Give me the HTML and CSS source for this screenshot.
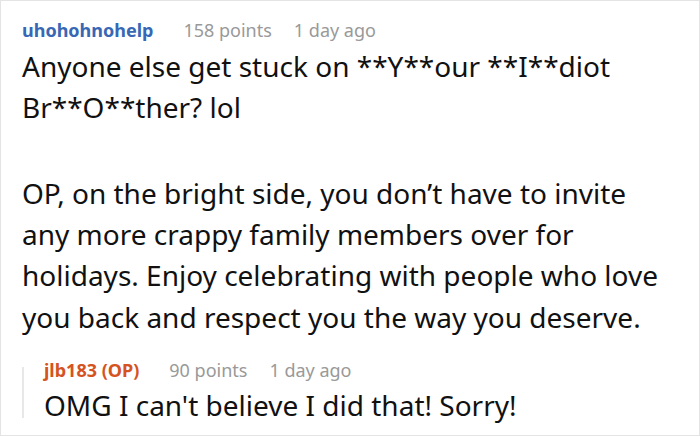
FILE: index.html
```html
<!DOCTYPE html>
<html>
<head>
<meta charset="utf-8">
<link rel="stylesheet" href="styles.css">
</head>
<body>
<div class="card">
  <div class="meta">
    <span class="user">uhohohnohelp</span>
    <span class="info">158 points</span>
    <span class="info">1 day ago</span>
  </div>
  <div class="body">
    <p>Anyone else get stuck on **Y**our **I**diot Br**O**ther? lol</p>
    <p>OP, on the bright side, you don’t have to invite any more crappy family members over for holidays. Enjoy celebrating with people who love you back and respect you the way you deserve.</p>
  </div>
  <div class="reply">
    <div class="meta">
      <span class="user op">jlb183 (OP)</span>
      <span class="info">90 points</span>
      <span class="info">1 day ago</span>
    </div>
    <div class="body">
      <p>OMG I can't believe I did that! Sorry!</p>
    </div>
  </div>
</div>
</body>
</html>
```
FILE: styles.css
```css
html, body {
  margin: 0;
  padding: 0;
  background: #fff;
}
.card {
  width: 700px;
  height: 436px;
  box-sizing: border-box;
  border: 1px solid #e4e4e4;
  padding: 17px 20px 0 21px;
  font-family: "Noto Sans", sans-serif;
  color: #111;
  overflow: hidden;
}
.meta {
  display: flex;
  gap: 22px;
  font-size: 18px;
  line-height: 24px;
}
.user {
  font-weight: bold;
  color: #3767b5;
  margin-right: 8px;
}
.user.op {
  color: #d5531f;
}
.info {
  color: #999;
}
.body {
  font-size: 28px;
  line-height: 41.3px;
}
.body p {
  margin: 3.5px 0 44.7px;
}
.body p:last-child {
  margin-bottom: 0;
}
.reply {
  position: relative;
  margin-top: 20px;
  padding-left: 22px;
}
.reply::before {
  content: "";
  position: absolute;
  left: 0;
  top: 9px;
  bottom: 9px;
  width: 2px;
  background: #e8e8e8;
}
```
